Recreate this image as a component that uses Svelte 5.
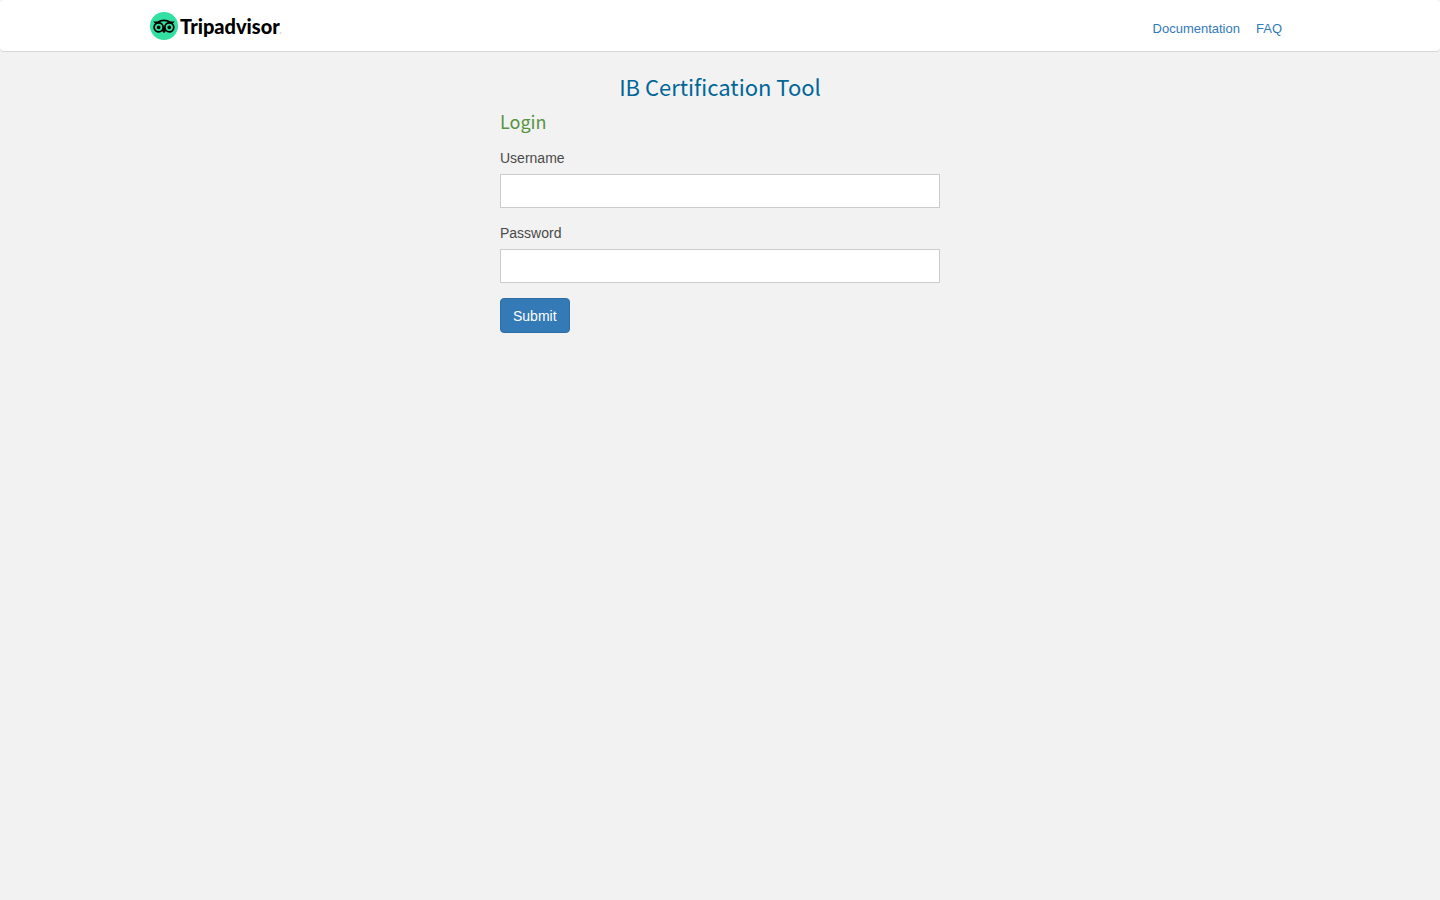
<script>
  let username = $state('');
  let password = $state('');
</script>

<header>
  <div class="bar">
    <a class="brand" href="#home" aria-label="Tripadvisor">
      <svg viewBox="0 0 28 28" aria-hidden="true">
        <circle cx="14" cy="14" r="14" fill="#34e0a1" />
        <path
          transform="translate(3.3 3.6) scale(.89)"
          d="M12.006 4.295c-2.67 0-5.338.784-7.645 2.353H0l1.963 2.135a5.997 5.997 0 0 0 4.04 10.43 5.976 5.976 0 0 0 4.075-1.6L12 19.705l1.922-2.09a5.972 5.972 0 0 0 4.072 1.598 6 6 0 0 0 6-5.998 5.982 5.982 0 0 0-1.957-4.432L24 6.648h-4.35a13.573 13.573 0 0 0-7.644-2.353zM12 6.255c1.531 0 3.063.303 4.504.903C13.943 8.138 12 10.43 12 13.1c0-2.671-1.942-4.962-4.504-5.942A11.72 11.72 0 0 1 12 6.256zM6.002 9.157a4.059 4.059 0 1 1 0 8.118 4.059 4.059 0 0 1 0-8.118zm11.992.002a4.057 4.057 0 1 1 .003 8.115 4.057 4.057 0 0 1-.003-8.115zm-11.992 1.93a2.128 2.128 0 0 0 0 4.256 2.128 2.128 0 0 0 0-4.256zm11.992 0a2.128 2.128 0 0 0 0 4.256 2.128 2.128 0 0 0 0-4.256z"
        />
      </svg>
      <span>Tripadvisor<small>®</small></span>
    </a>
    <nav>
      <a href="#documentation">Documentation</a>
      <a href="#faq">FAQ</a>
    </nav>
  </div>
</header>

<main>
  <h1>IB Certification Tool</h1>
  <form onsubmit={(e) => e.preventDefault()}>
    <h2>Login</h2>
    <div class="field">
      <label for="username">Username</label>
      <input id="username" type="text" bind:value={username} />
    </div>
    <div class="field">
      <label for="password">Password</label>
      <input id="password" type="password" bind:value={password} />
    </div>
    <button type="submit">Submit</button>
  </form>
</main>

<style>
  :global(body) {
    background: #f2f2f2;
    color: #4a4a4a;
    font: 14px/20px "Liberation Sans", Arial, sans-serif;
  }
  * {
    box-sizing: border-box;
  }
  header {
    background: #fff;
    border-bottom: 1px solid #d6d6d6;
    border-radius: 4px;
  }
  .bar {
    display: flex;
    justify-content: space-between;
    align-items: center;
    max-width: 1140px;
    height: 51px;
    margin: 0 auto;
  }
  .brand {
    display: flex;
    align-items: center;
    gap: 2px;
    color: #000;
    text-decoration: none;
    font: 900 20px/28px Lato, sans-serif;
  }
  .brand svg {
    width: 28px;
    height: 28px;
  }
  .brand small {
    font-size: 2px;
    font-weight: 400;
    line-height: 1;
  }
  nav {
    display: flex;
    gap: 16px;
    padding: 6px 8px 0 0;
    font-size: 13px;
  }
  nav a {
    color: #337ab7;
    text-decoration: none;
  }
  main {
    max-width: 440px;
    margin: 0 auto;
    padding-top: 18px;
  }
  h1,
  h2 {
    margin: 0;
    font-family: "Noto Sans CJK SC", sans-serif;
    font-weight: 400;
    line-height: 32px;
  }
  h1 {
    color: #069;
    font-size: 22px;
    text-align: center;
  }
  h2 {
    margin: 3px 0 11px;
    color: #589442;
    font-size: 18px;
  }
  .field {
    margin-bottom: 15px;
  }
  label {
    display: block;
    margin-bottom: 6px;
  }
  input {
    display: block;
    width: 100%;
    height: 34px;
    padding: 6px 12px;
    border: 1px solid #ccc;
    border-radius: 0;
    background: #fff;
    color: #555;
    font: inherit;
  }
  button {
    height: 35px;
    padding: 6px 12px;
    border: 1px solid #2e6da4;
    border-radius: 4px;
    background: #337ab7;
    color: #fff;
    font: inherit;
    cursor: pointer;
  }
</style>
